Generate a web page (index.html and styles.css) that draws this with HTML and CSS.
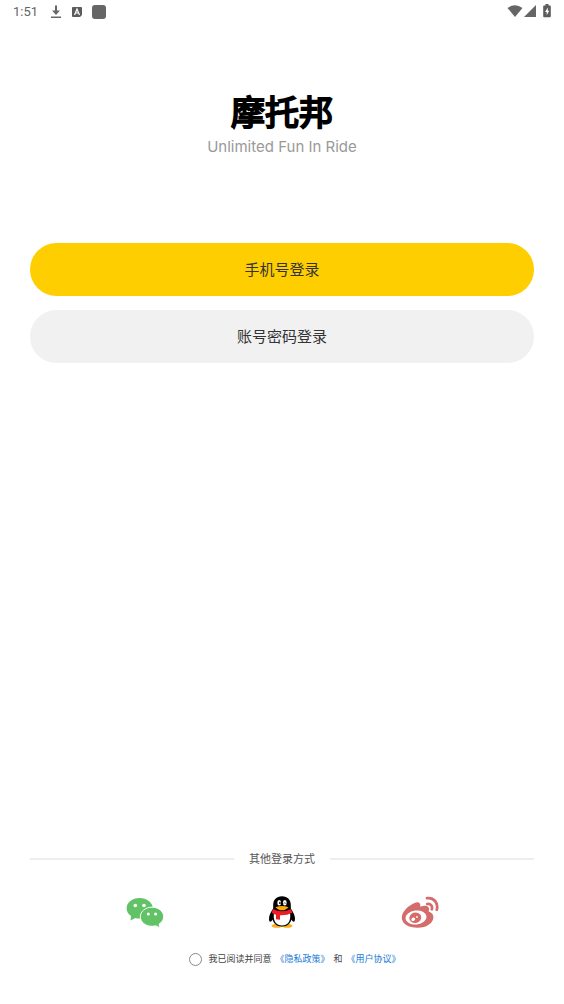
FILE: index.html
```html
<!DOCTYPE html>
<html lang="zh-CN">
<head>
    <meta charset="UTF-8">
    <meta name="viewport" content="width=device-width, initial-scale=1.0">
    <title>摩托邦</title>
    <link rel="stylesheet" href="styles.css">
</head>
<body>
    <div class="status-bar">
        <div class="status-left">
            <span class="time">1:51</span>
            <svg class="download" width="12" height="14" viewBox="0 0 12 14" fill="#666">
                <path d="M5 .500h2v5h3L6 10 2 5.500h3z"/>
                <path d="M1 11.500h10v1.500H1z"/>
            </svg>
            <svg class="lang" width="10" height="10" viewBox="0 0 10 10">
                <rect width="10" height="10" rx="1" fill="#5c5c5c"/>
                <path d="M2.500 8L5 2l2.500 6M3.500 6h3" fill="none" stroke="#fff" stroke-width="1.200"/>
                <path d="M8 10l2-2v2z" fill="#fff"/>
            </svg>
            <span class="app-dot"></span>
        </div>
        <div class="status-right">
            <svg width="16" height="12" viewBox="0 0 16 12" fill="#666">
                <path d="M.5 3Q8-2.500 15.500 3L8 12z"/>
            </svg>
            <svg width="12" height="12" viewBox="0 0 12 12" fill="#666">
                <path d="M12 0v12H0z"/>
            </svg>
            <svg class="battery" width="8" height="14" viewBox="0 0 8 14">
                <path d="M2.500 0h3v1.500H7q.8 0 .8.8v10q0 .9-.8.9H1q-.8 0-.8-.9v-10q0-.8.8-.8h1.500z" fill="#5c5c5c"/>
                <path d="M4.800 3.500L2 8h1.700v3.200L6.300 6.700H4.800z" fill="#fff"/>
            </svg>
        </div>
    </div>

    <main class="login">
        <header class="brand">
            <h1>摩托邦</h1>
            <p>Unlimited Fun In Ride</p>
        </header>

        <div class="buttons">
            <button type="button" class="btn btn-primary">手机号登录</button>
            <button type="button" class="btn">账号密码登录</button>
        </div>

        <footer class="other">
            <div class="divider"><span>其他登录方式</span></div>

            <div class="socials">
                <button type="button" class="social" aria-label="微信登录">
                    <svg width="38" height="32" viewBox="0 0 38 32">
                        <path d="M13.500 2C6.300 2 .6 6.500 .6 12.200c0 3.300 1.700 6 4.500 7.900L4.500 24.600l4.900-2.700c1.300.4 2.700.6 4.100.6C20.700 22.500 26.800 18 26.800 12.200S20.700 2 13.500 2z" fill="#62c266"/>
                        <path d="M26 11.200c-6.500 0-11.700 4.200-11.700 9.500s5.200 9.600 11.700 9.600c1.300 0 2.500-.2 3.700-.5l4.300 2.100-.9-3.800c2.700-1.700 4.600-4.400 4.600-7.400 0-5.300-5.200-9.500-11.700-9.500z" fill="#62c266" stroke="#fff" stroke-width="1"/>
                        <g fill="#fff">
                            <circle cx="9.300" cy="9.500" r="1.800"/>
                            <circle cx="18" cy="9.500" r="1.800"/>
                            <circle cx="22.300" cy="18" r="1.500"/>
                            <circle cx="29.600" cy="18" r="1.500"/>
                        </g>
                    </svg>
                </button>
                <button type="button" class="social" aria-label="QQ登录">
                    <svg width="28" height="32" viewBox="0 0 28 32">
                        <ellipse cx="9" cy="29.800" rx="5.500" ry="2" fill="#faad14"/>
                        <ellipse cx="19" cy="29.800" rx="5.500" ry="2" fill="#faad14"/>
                        <path d="M14 .3C8.400.3 5.200 4 5.200 9v3.500C3 16 1 19 1 22.500c0 2 .5 3.300 1.200 3.300s1.600-1 2.300-2.300C5.600 27.700 9 30.500 14 30.500s8.400-2.800 9.500-7c.7 1.300 1.600 2.300 2.300 2.300s1.200-1.300 1.200-3.300c0-3.500-2-6.500-4.200-10V9c0-5-3.200-8.700-8.800-8.700z" fill="#000"/>
                        <path d="M6 17h16c1.200 7-1.500 12.500-8 12.500S4.800 24 6 17z" fill="#fff"/>
                        <path d="M4.800 13q9.200 4.500 18.400 0l1 3.700q-5.200 2.800-12.200 2.500v4.600l-4-.6v-4.500q-2.200-.5-4.200-1.700z" fill="#ee1c25"/>
                        <path d="M7.500 11.200Q14 8.700 20.500 11.200 18 14.300 14 14.300t-6.500-3.100z" fill="#faab07"/>
                        <ellipse cx="11.200" cy="6.700" rx="1.900" ry="2.700" fill="#fff"/>
                        <ellipse cx="16.800" cy="6.700" rx="1.900" ry="2.700" fill="#fff"/>
                        <ellipse cx="11.900" cy="6.900" rx=".8" ry="1.200"/>
                        <path d="M16 7.500q.8-1.800 1.600 0" fill="none" stroke="#000" stroke-width=".8"/>
                    </svg>
                </button>
                <button type="button" class="social" aria-label="微博登录">
                    <svg width="38" height="32" viewBox="0 0 38 32">
                        <path d="M13.500 7C17.500 5.300 20 7 19.300 10.800c3.500-1.300 6.700-1.300 8 .2 1 1.300.9 2.800.3 4.600 3.200 1 4.800 2.800 4.800 5.600 0 5.500-6.500 10.500-15.700 10.500C7.500 31.700.8 27.800.8 21.500.8 16 7 9.700 13.500 7z" fill="#d46c6b"/>
                        <ellipse cx="15" cy="21.500" rx="10.600" ry="7" transform="rotate(-7 15 21.500)" fill="#fff"/>
                        <ellipse cx="14.300" cy="21.700" rx="6" ry="5.200" transform="rotate(-18 14.300 21.700)" fill="#d46c6b"/>
                        <ellipse cx="12.300" cy="23.300" rx="2" ry="1.600" transform="rotate(-25 12.300 23.300)" fill="#fff"/>
                        <circle cx="16" cy="21" r=".9" fill="#fff"/>
                        <path d="M26 2.200C32.500 1 37.700 7 35.800 13.800M26.200 8c3.300-.8 5.600 2 4.600 5.300" fill="none" stroke="#d46c6b" stroke-width="2.700" stroke-linecap="round"/>
                    </svg>
                </button>
            </div>

            <div class="agreement">
                <input type="checkbox" id="agree">
                <label for="agree">我已阅读并同意</label>
                <a href="#privacy">《隐私政策》</a>
                <span>和</span>
                <a href="#terms">《用户协议》</a>
            </div>
        </footer>
    </main>
</body>
</html>
```

FILE: styles.css
```css
* {
    box-sizing: border-box;
}

body {
    margin: 0;
    min-height: 100vh;
    display: flex;
    flex-direction: column;
    background: #fff;
    color: #333;
    font-family: Roboto, "Noto Sans CJK SC", sans-serif;
}

button {
    border: none;
    padding: 0;
    font-family: inherit;
    color: inherit;
    cursor: pointer;
}

svg {
    display: block;
}

/* Status bar */
.status-bar {
    height: 23px;
    padding: 0 13px;
    display: flex;
    justify-content: space-between;
    align-items: center;
    color: #666;
}

.status-left,
.status-right {
    display: flex;
    align-items: center;
}

.status-left {
    gap: 10px;
}

.status-right {
    gap: 1px;
    padding-bottom: 1px;
}

.time {
    font-size: 13px;
    letter-spacing: 0;
}

.download {
    margin-left: 2px;
}

.app-dot {
    width: 14px;
    height: 14px;
    border-radius: 3px;
    background: #666;
}

.battery {
    margin-left: 6px;
}

/* Login */
.login {
    flex: 1;
    display: flex;
    flex-direction: column;
    padding: 66px 30px 37px;
}

.brand {
    text-align: center;
}

.brand h1 {
    margin: 0;
    font-size: 34px;
    line-height: 48px;
    font-weight: 400;
    color: #000;
    -webkit-text-stroke: 2px #000;
    stroke-linejoin: round;
}

.brand p {
    margin: 0;
    font-family: Inter, sans-serif;
    font-size: 15px;
    line-height: 20px;
    color: #999;
}

.buttons {
    display: flex;
    flex-direction: column;
    gap: 14px;
    margin-top: 86px;
}

.btn {
    height: 53px;
    padding-bottom: 2px;
    border-radius: 27px;
    background: #f1f1f1;
    font-size: 15px;
}

.btn-primary {
    background: #ffce00;
}

/* Other login methods */
.other {
    margin-top: auto;
}

.divider {
    display: flex;
    align-items: center;
    gap: 15px;
    font-size: 11px;
    line-height: 18px;
    color: #555;
}

.divider span {
    padding-top: 2px;
}

.divider::before,
.divider::after {
    content: "";
    flex: 1;
    height: 2px;
    background: #eee;
}

.socials {
    display: flex;
    justify-content: space-evenly;
    margin-top: 20px;
}

.social {
    width: 46px;
    height: 46px;
    display: flex;
    justify-content: center;
    align-items: center;
    background: none;
}

.agreement {
    display: flex;
    justify-content: center;
    align-items: center;
    gap: 4px;
    margin-top: 16px;
    padding-left: 26px;
    font-size: 9px;
    line-height: 16px;
    color: #444;
}

.agreement input {
    appearance: none;
    width: 13px;
    height: 13px;
    margin: 0 2px 0 0;
    border: 1px solid #888;
    border-radius: 50%;
}

.agreement input:checked {
    background: #ffce00;
}

.agreement a {
    color: #1a7ad4;
    text-decoration: none;
}
```
